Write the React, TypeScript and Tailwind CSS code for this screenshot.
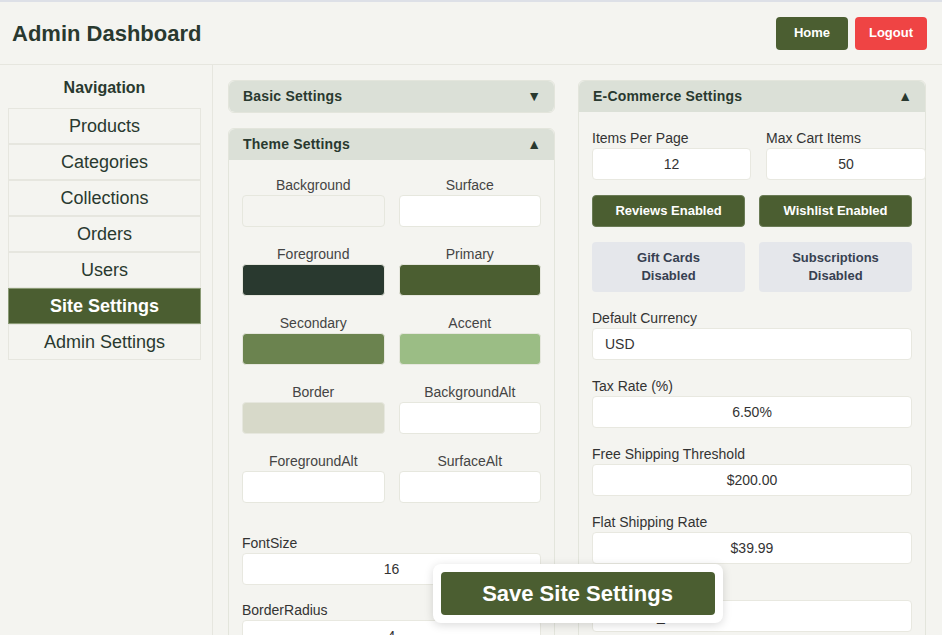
import type { ReactNode } from 'react';

const FONT = "font-['Liberation_Sans',Arial,sans-serif]";

const NAV = ['Products', 'Categories', 'Collections', 'Orders', 'Users', 'Site Settings', 'Admin Settings'];

const SWATCHES: { label: string; bg: string }[] = [
    { label: 'Background', bg: 'bg-[#f4f4f0]' },
    { label: 'Surface', bg: 'bg-white' },
    { label: 'Foreground', bg: 'bg-[#29392f]' },
    { label: 'Primary', bg: 'bg-[#4b5e31]' },
    { label: 'Secondary', bg: 'bg-[#6b834f]' },
    { label: 'Accent', bg: 'bg-[#9bbd85]' },
    { label: 'Border', bg: 'bg-[#d7d9c9]' },
    { label: 'BackgroundAlt', bg: 'bg-white' },
    { label: 'ForegroundAlt', bg: 'bg-white' },
    { label: 'SurfaceAlt', bg: 'bg-white' },
];

function Panel({ title, open, children }: { title: string; open: boolean; children?: ReactNode }) {
    return (
        <div className="rounded-md border border-[#e3e5dc] bg-[#f4f4f0]">
            <div
                className={`flex h-[31px] items-center justify-between bg-[#dbe0d7] pl-[14px] pr-[13px] ${
                    open ? 'rounded-t-md' : 'rounded-md'
                }`}
            >
                <span className="text-[14px] font-bold tracking-[0.2px] text-[#29392f]">{title}</span>
                <span className="text-[14px] text-[#29392f]">{open ? '▲' : '▼'}</span>
            </div>
            {open && children}
        </div>
    );
}

function Field({ label, value, left }: { label: string; value: string; left?: boolean }) {
    return (
        <div className="flex flex-col">
            <label className="h-[20px] text-[14px] leading-[20px] text-[#333]">{label}</label>
            <div
                className={`flex h-[32px] items-center rounded border border-[#e8e8e0] bg-white text-[14px] text-[#333] ${
                    left ? 'px-3' : 'justify-center'
                }`}
            >
                {value}
            </div>
        </div>
    );
}

export default function App() {
    return (
        <div className={`min-h-screen bg-[#f4f4f0] text-[#29392f] ${FONT}`}>
            <header className="flex h-[65px] items-center justify-between border-t-2 border-b border-t-[#dde0e7] border-b-[#e6e6df] pl-3 pr-[15px]">
                <h1 className="text-[22px] font-bold text-[#29392f]">Admin Dashboard</h1>
                <div className="flex gap-[7px]">
                    <button className="h-[33px] w-[72px] rounded bg-[#4b5e31] text-[13px] font-bold text-white">Home</button>
                    <button className="h-[33px] w-[72px] rounded bg-[#ef4444] text-[13px] font-bold text-white">Logout</button>
                </div>
            </header>

            <div className="flex">
                <aside className="w-[213px] shrink-0 border-r border-[#e6e6df] pl-2 pr-[11px] pt-[13px] min-h-[570px]">
                    <div className="h-[30px] text-center text-[16px] font-bold leading-[20px]">Navigation</div>
                    <nav className="flex flex-col">
                        {NAV.map((item) => {
                            const active = item === 'Site Settings';
                            return (
                                <div
                                    key={item}
                                    className={`flex h-[36px] items-center justify-center border text-[18px] ${
                                        active
                                            ? 'border-[#8a9a75] bg-[#4b5e31] font-bold text-white'
                                            : 'border-[#e6e6df] text-[#29392f]'
                                    }`}
                                >
                                    {item}
                                </div>
                            );
                        })}
                    </nav>
                </aside>

                <main className="flex-1 pl-[15px] pr-[16px] pt-[15px]">
                    <div className="grid grid-cols-[327px_348px] gap-[23px]">
                        <div className="flex flex-col gap-[15px]">
                            <Panel title="Basic Settings" open={false} />
                            <Panel title="Theme Settings" open>
                                <div className="px-[13px] pt-[15px] pb-6">
                                    <div className="grid grid-cols-2 gap-x-[14px] gap-y-[17px]">
                                        {SWATCHES.map((s) => (
                                            <div key={s.label} className="flex flex-col">
                                                <span className="h-[20px] text-center text-[14px] leading-[20px] text-[#444]">
                                                    {s.label}
                                                </span>
                                                <div className={`h-[32px] rounded border border-[#e6e7de] ${s.bg}`} />
                                            </div>
                                        ))}
                                    </div>
                                    <div className="mt-[30px] flex flex-col gap-[15px]">
                                        <Field label="FontSize" value="16" />
                                        <Field label="BorderRadius" value="4" />
                                        <Field label="Spacing" value="8" />
                                    </div>
                                </div>
                            </Panel>
                        </div>

                        <Panel title="E-Commerce Settings" open>
                            <div className="px-[13px] pt-[16px] pb-6">
                                <div className="grid grid-cols-[159px_160px] gap-x-[15px]">
                                    <Field label="Items Per Page" value="12" />
                                    <Field label="Max Cart Items" value="50" />
                                </div>
                                <div className="mt-[15px] grid w-[320px] grid-cols-2 gap-x-[14px] gap-y-[15px]">
                                    <button className="h-[32px] rounded border border-[#6a7b55] bg-[#4b5e31] text-[13px] font-bold text-white">
                                        Reviews Enabled
                                    </button>
                                    <button className="h-[32px] rounded border border-[#6a7b55] bg-[#4b5e31] text-[13px] font-bold text-white">
                                        Wishlist Enabled
                                    </button>
                                    <button className="h-[50px] rounded bg-[#e5e7eb] text-[13px] font-bold leading-[18px] text-[#374151]">
                                        Gift Cards
                                        <br />
                                        Disabled
                                    </button>
                                    <button className="h-[50px] rounded bg-[#e5e7eb] text-[13px] font-bold leading-[18px] text-[#374151]">
                                        Subscriptions
                                        <br />
                                        Disabled
                                    </button>
                                </div>
                                <div className="mt-[16px] flex w-[320px] flex-col gap-[16px]">
                                    <Field label="Default Currency" value="USD" left />
                                    <Field label="Tax Rate (%)" value="6.50%" />
                                    <Field label="Free Shipping Threshold" value="$200.00" />
                                    <Field label="Flat Shipping Rate" value="$39.99" />
                                    <Field label="Payment Method" value="CREDIT_CARD" left />
                                </div>
                            </div>
                        </Panel>
                    </div>
                </main>
            </div>

            <div className="pointer-events-none fixed bottom-[12px] left-[213px] right-0 flex justify-center">
                <div className="pointer-events-auto rounded-lg bg-white p-2 shadow-[0_2px_10px_rgba(0,0,0,0.15)]">
                    <button className="h-[43px] w-[274px] rounded bg-[#4b5e31] text-[22px] font-bold text-white">
                        Save Site Settings
                    </button>
                </div>
            </div>
        </div>
    );
}
